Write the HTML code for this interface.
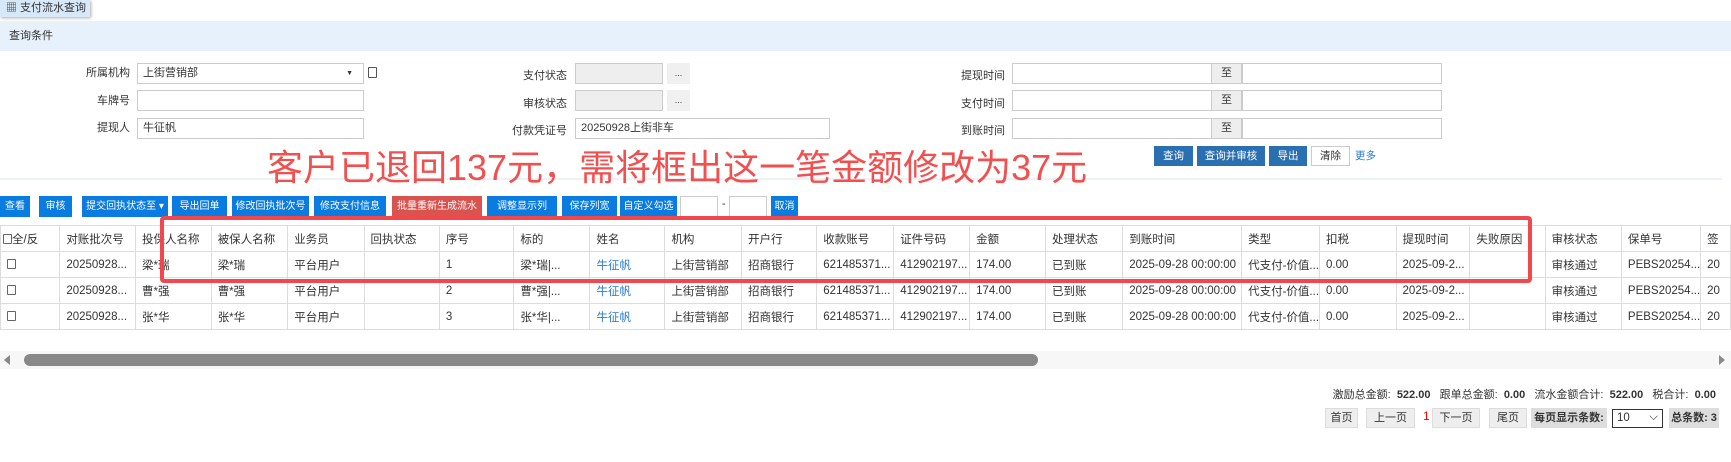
<!DOCTYPE html>
<html><head><meta charset="utf-8"><style>
*{box-sizing:border-box;margin:0;padding:0}
body{width:1731px;height:462px;overflow:hidden;background:#fff;font-family:"Liberation Sans","Noto Sans CJK SC",sans-serif;font-size:11px;color:#333;position:relative}
.a{position:absolute}
.tab{left:0;top:0;width:90px;height:17px;background:#d7e8f8;box-shadow:1px 1px 3px #aaa;font-size:11px;line-height:16px;padding-left:6px}
.band{left:0;top:21px;width:1731px;height:30px;background:#e7f1fb;line-height:30px;padding-left:9px;font-size:11px}
.lbl{text-align:right;font-size:11px;line-height:20px}
.inp{border:1px solid #ccc;height:21px;background:#fff;font-size:11px;line-height:19px;padding-left:5px}
.gr{background:#eee}
.btn{background:#0a7be0;color:#fff;font-size:10px;text-align:center;line-height:21px;height:21px}
.qb{background:#2a6fb0;color:#fff;font-size:10.5px;text-align:center;line-height:20px;height:20px}
table{border-collapse:collapse;table-layout:fixed;position:absolute;left:0;top:225px}
td{border:1px solid #ddd;height:26px;padding-left:6px;font-size:11.5px;white-space:nowrap;overflow:hidden;color:#333}
tr.h td{height:26px}
.lk{color:#2a7bd0}
.cb{display:inline-block;width:9px;height:10px;border:1px solid #666;border-radius:1px;vertical-align:middle}
.pg{background:#eee;border:1px solid #ddd;height:20px;line-height:18px;text-align:center;font-size:11px}
</style></head><body>
<div class="a tab">&#9638; 支付流水查询</div>
<div class="a band">查询条件</div>

<div class="a lbl" style="left:60px;top:63px;width:70px">所属机构</div>
<div class="a inp" style="left:137px;top:63px;width:227px">上街营销部<span style="position:absolute;right:10px;font-size:7px">▼</span></div>
<div class="a" style="left:368px;top:67px;width:9px;height:11px;border:1px solid #555;border-radius:1px"></div>
<div class="a lbl" style="left:60px;top:91px;width:70px">车牌号</div>
<div class="a inp" style="left:137px;top:90px;width:227px"></div>
<div class="a lbl" style="left:60px;top:118px;width:70px">提现人</div>
<div class="a inp" style="left:137px;top:118px;width:227px">牛征帆</div>

<div class="a lbl" style="left:490px;top:66px;width:77px">支付状态</div>
<div class="a inp gr" style="left:575px;top:63px;width:88px"></div>
<div class="a" style="left:667px;top:63px;width:23px;height:21px;background:#f0f0f0;text-align:center;font-size:9px;line-height:21px">...</div>
<div class="a lbl" style="left:490px;top:94px;width:77px">审核状态</div>
<div class="a inp gr" style="left:575px;top:90px;width:88px"></div>
<div class="a" style="left:667px;top:90px;width:23px;height:21px;background:#f0f0f0;text-align:center;font-size:9px;line-height:21px">...</div>
<div class="a lbl" style="left:490px;top:121px;width:77px">付款凭证号</div>
<div class="a inp" style="left:575px;top:118px;width:255px">20250928上街非车</div>

<div class="a lbl" style="left:930px;top:66px;width:75px">提现时间</div>
<div class="a lbl" style="left:930px;top:94px;width:75px">支付时间</div>
<div class="a lbl" style="left:930px;top:121px;width:75px">到账时间</div>
<div class="a inp" style="left:1012px;top:63px;width:200px"></div><div class="a inp gr" style="left:1211px;top:63px;width:31px;text-align:center;padding:0">至</div><div class="a inp" style="left:1242px;top:63px;width:200px"></div>
<div class="a inp" style="left:1012px;top:90px;width:200px"></div><div class="a inp gr" style="left:1211px;top:90px;width:31px;text-align:center;padding:0">至</div><div class="a inp" style="left:1242px;top:90px;width:200px"></div>
<div class="a inp" style="left:1012px;top:118px;width:200px"></div><div class="a inp gr" style="left:1211px;top:118px;width:31px;text-align:center;padding:0">至</div><div class="a inp" style="left:1242px;top:118px;width:200px"></div>

<div class="a qb" style="left:1154px;top:146px;width:39px">查询</div>
<div class="a qb" style="left:1197px;top:146px;width:68px">查询并审核</div>
<div class="a qb" style="left:1269px;top:146px;width:38px">导出</div>
<div class="a" style="left:1311px;top:146px;width:39px;height:20px;border:1px solid #ccc;text-align:center;line-height:18px;font-size:10.5px">清除</div>
<div class="a" style="left:1355px;top:148px;color:#2a7bd0;font-size:10.5px">更多</div>
<div class="a" style="left:0;top:178px;width:1722px;height:2px;background:#eef2f6"></div>

<div class="a" style="left:267px;top:146px;color:#f24f4f;font-size:36px;line-height:44px;white-space:nowrap;font-family:'Liberation Sans','Noto Sans CJK SC',sans-serif">客户已退回137元，需将框出这一笔金额修改为37元</div>

<div class="a btn" style="left:0;top:196px;width:30px">查看</div>
<div class="a btn" style="left:39px;top:196px;width:33px">审核</div>
<div class="a btn" style="left:82px;top:196px;width:86px">提交回执状态至 ▾</div>
<div class="a btn" style="left:172px;top:196px;width:55px">导出回单</div>
<div class="a btn" style="left:232px;top:196px;width:77px">修改回执批次号</div>
<div class="a btn" style="left:314px;top:196px;width:72px">修改支付信息</div>
<div class="a btn" style="left:392px;top:196px;width:90px;background:#d9534f">批量重新生成流水</div>
<div class="a btn" style="left:487px;top:196px;width:70px">调整显示列</div>
<div class="a btn" style="left:562px;top:196px;width:55px">保存列宽</div>
<div class="a btn" style="left:620px;top:196px;width:57px">自定义勾选</div>
<div class="a inp" style="left:680px;top:196px;width:38px"></div>
<div class="a" style="left:722px;top:198px">-</div>
<div class="a inp" style="left:729px;top:196px;width:38px"></div>
<div class="a btn" style="left:771px;top:196px;width:27px">取消</div>

<table>
<colgroup><col style="width:60px"><col style="width:76px"><col style="width:76px"><col style="width:77px"><col style="width:77px"><col style="width:76px"><col style="width:76px"><col style="width:77px"><col style="width:76px"><col style="width:77px"><col style="width:76px"><col style="width:77px"><col style="width:76px"><col style="width:77px"><col style="width:78px"><col style="width:119px"><col style="width:76px"><col style="width:78px"><col style="width:74px"><col style="width:76px"><col style="width:77px"><col style="width:79px"><col style="width:30px"></colgroup>
<tr class="h"><td style="padding-left:2px"><span class="cb"></span>全/反</td><td>对账批次号</td><td>投保人名称</td><td>被保人名称</td><td>业务员</td><td>回执状态</td><td>序号</td><td>标的</td><td>姓名</td><td>机构</td><td>开户行</td><td>收款账号</td><td>证件号码</td><td>金额</td><td>处理状态</td><td>到账时间</td><td>类型</td><td>扣税</td><td>提现时间</td><td>失败原因</td><td>审核状态</td><td>保单号</td><td>签</td></tr>
<tr><td><span class="cb"></span></td><td>20250928...</td><td>梁*瑞</td><td>梁*瑞</td><td>平台用户</td><td></td><td>1</td><td>梁*瑞|...</td><td class="lk">牛征帆</td><td>上街营销部</td><td>招商银行</td><td>621485371...</td><td>412902197...</td><td>174.00</td><td>已到账</td><td>2025-09-28 00:00:00</td><td>代支付-价值...</td><td>0.00</td><td>2025-09-2...</td><td></td><td>审核通过</td><td>PEBS20254...</td><td>20</td></tr>
<tr><td><span class="cb"></span></td><td>20250928...</td><td>曹*强</td><td>曹*强</td><td>平台用户</td><td></td><td>2</td><td>曹*强|...</td><td class="lk">牛征帆</td><td>上街营销部</td><td>招商银行</td><td>621485371...</td><td>412902197...</td><td>174.00</td><td>已到账</td><td>2025-09-28 00:00:00</td><td>代支付-价值...</td><td>0.00</td><td>2025-09-2...</td><td></td><td>审核通过</td><td>PEBS20254...</td><td>20</td></tr>
<tr><td><span class="cb"></span></td><td>20250928...</td><td>张*华</td><td>张*华</td><td>平台用户</td><td></td><td>3</td><td>张*华|...</td><td class="lk">牛征帆</td><td>上街营销部</td><td>招商银行</td><td>621485371...</td><td>412902197...</td><td>174.00</td><td>已到账</td><td>2025-09-28 00:00:00</td><td>代支付-价值...</td><td>0.00</td><td>2025-09-2...</td><td></td><td>审核通过</td><td>PEBS20254...</td><td>20</td></tr>
</table>
<div class="a" style="left:160px;top:216px;width:1372px;height:67px;border:4px solid #f2474c;border-radius:4px"></div>

<div class="a" style="left:0;top:351px;width:1731px;height:18px;background:#f7f7f7"></div>
<div class="a" style="left:4px;top:355px;width:0;height:0;border-top:5px solid transparent;border-bottom:5px solid transparent;border-right:6px solid #888"></div>
<div class="a" style="left:24px;top:354px;width:1014px;height:12px;background:#888;border-radius:6px"></div>
<div class="a" style="left:1719px;top:355px;width:0;height:0;border-top:5px solid transparent;border-bottom:5px solid transparent;border-left:6px solid #888"></div>

<div class="a" style="right:15px;top:386px;font-size:11px;white-space:nowrap">激励总金额: &nbsp;<b>522.00</b> &nbsp; 跟单总金额: &nbsp;<b>0.00</b> &nbsp; 流水金额合计: &nbsp;<b>522.00</b> &nbsp; 税合计: &nbsp;<b>0.00</b></div>
<div class="a pg" style="left:1325px;top:408px;width:33px">首页</div>
<div class="a pg" style="left:1366px;top:408px;width:49px">上一页</div>
<div class="a" style="left:1423px;top:409px;color:#e00;font-size:12px">1</div>
<div class="a pg" style="left:1432px;top:408px;width:48px">下一页</div>
<div class="a pg" style="left:1489px;top:408px;width:38px">尾页</div>
<div class="a pg" style="left:1531px;top:408px;width:76px;font-weight:bold;background:#ddd;border:none;line-height:20px">每页显示条数:</div>
<div class="a" style="left:1612px;top:409px;width:51px;height:19px;border:1px solid #333;font-size:11.5px;line-height:17px;padding-left:4px">10<span style="position:absolute;right:4px;top:-1px">⌵</span></div>
<div class="a pg" style="left:1669px;top:408px;width:50px;font-weight:bold;background:#ddd;border:none;line-height:20px">总条数: 3</div>
</body></html>
